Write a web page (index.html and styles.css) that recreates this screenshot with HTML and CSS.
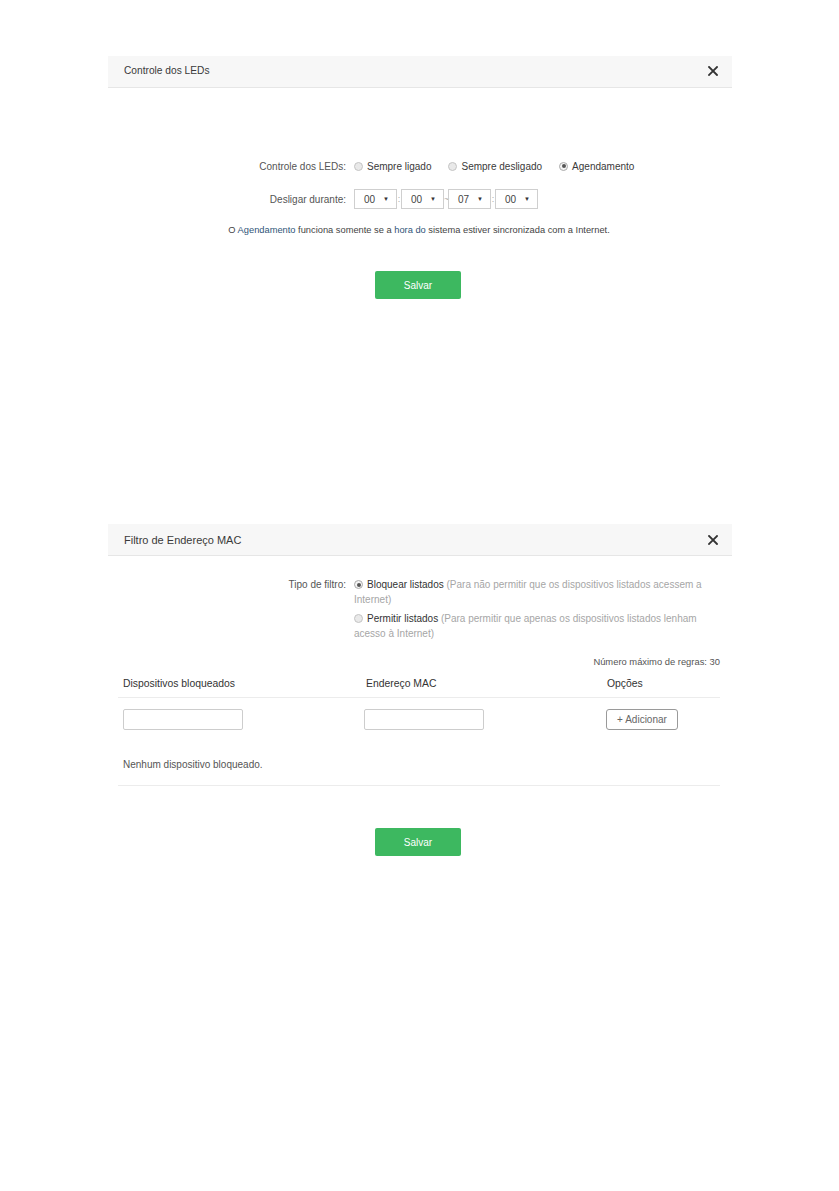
FILE: index.html
```html
<!DOCTYPE html>
<html lang="pt">
<head>
<meta charset="utf-8">
<title>Controle dos LEDs</title>
<link rel="stylesheet" href="styles.css">
</head>
<body>
<section class="panel panel-leds">
  <header class="panel-head">
    <span class="panel-title">Controle dos LEDs</span>
    <svg class="close" width="10" height="10" viewBox="0 0 10 10"><path d="M1 1L9 9M9 1L1 9" stroke="#333" stroke-width="1.8" stroke-linecap="square"/></svg>
  </header>
  <div class="panel-body leds-body">
    <div class="form-row">
      <span class="label">Controle dos LEDs:</span>
      <div class="radios">
        <span class="radio-item"><span class="radio"></span>Sempre ligado</span>
        <span class="radio-item"><span class="radio"></span>Sempre desligado</span>
        <span class="radio-item"><span class="radio checked"></span>Agendamento</span>
      </div>
    </div>
    <div class="form-row">
      <span class="label">Desligar durante:</span>
      <div class="times">
        <span class="select">00<span class="arrow">▼</span></span>
        <span class="sep">:</span>
        <span class="select">00<span class="arrow">▼</span></span>
        <span class="sep">~</span>
        <span class="select">07<span class="arrow">▼</span></span>
        <span class="sep">:</span>
        <span class="select">00<span class="arrow">▼</span></span>
      </div>
    </div>
    <p class="note">O <span class="hl">Agendamento</span> funciona somente se a <span class="hl">hora do</span> sistema estiver sincronizada com a Internet.</p>
    <button class="btn-save">Salvar</button>
  </div>
</section>

<section class="panel panel-mac">
  <header class="panel-head">
    <span class="panel-title">Filtro de Endereço MAC</span>
    <svg class="close" width="10" height="10" viewBox="0 0 10 10"><path d="M1 1L9 9M9 1L1 9" stroke="#333" stroke-width="1.8" stroke-linecap="square"/></svg>
  </header>
  <div class="panel-body mac-body">
    <div class="form-row filter-row">
      <span class="label">Tipo de filtro:</span>
      <div class="options">
        <div class="option">
          <div class="opt-line"><span class="radio checked"></span><b>Bloquear listados</b> <span>(Para não permitir que os dispositivos listados acessem a</span></div>
          <div class="opt-line">Internet)</div>
        </div>
        <div class="option">
          <div class="opt-line"><span class="radio"></span><b>Permitir listados</b> <span>(Para permitir que apenas os dispositivos listados lenham</span></div>
          <div class="opt-line">acesso à Internet)</div>
        </div>
      </div>
    </div>
    <div class="table-wrap">
      <p class="max-rules">Número máximo de regras: 30</p>
      <div class="table">
        <div class="thead">
          <span class="cell">Dispositivos bloqueados</span>
          <span class="cell">Endereço MAC</span>
          <span class="cell">Opções</span>
        </div>
        <div class="trow">
          <span class="cell"><span class="input"></span></span>
          <span class="cell"><span class="input"></span></span>
          <span class="cell"><span class="btn-add">+ Adicionar</span></span>
        </div>
        <p class="empty">Nenhum dispositivo bloqueado.</p>
      </div>
    </div>
    <button class="btn-save">Salvar</button>
  </div>
</section>
</body>
</html>
```
FILE: styles.css
```css
* { box-sizing: border-box; }
body {
  margin: 0;
  background: #fff;
  font-family: "Liberation Sans", Arial, sans-serif;
  font-size: 10px;
  color: #333;
}
p { margin: 0; }

.panel {
  width: 624px;
  margin-left: 108px;
}
.panel-leds { margin-top: 56px; }
.panel-mac { margin-top: 225px; }

.panel-head {
  height: 32px;
  background: #f7f7f7;
  border-bottom: 1px solid #e6e6e6;
  display: flex;
  align-items: center;
  justify-content: space-between;
  padding: 0 14px 0 16px;
}
.panel-leds .panel-head { padding-bottom: 2px; }
.panel-title {
  font-size: 11px;
  color: #3a3a3a;
}
.panel-leds .panel-title { font-size: 10.2px; }
.close { display: block; }

.panel-body {
  display: flex;
  flex-direction: column;
}
.leds-body { padding-top: 68px; }
.mac-body { padding-top: 21px; }

.form-row {
  display: flex;
  align-items: center;
  gap: 8px;
  height: 20px;
}
.form-row + .form-row { margin-top: 13px; }
.label {
  width: 238px;
  text-align: right;
  color: #555;
}

.radios { display: flex; gap: 17px; }
.radio-item { display: flex; align-items: center; color: #3a3a3a; }
.radio {
  display: inline-block;
  flex: none;
  width: 9px;
  height: 9px;
  border-radius: 50%;
  border: 1px solid #c4c4c4;
  background: #e9e9e9;
  margin-right: 4px;
  position: relative;
}
.radio.checked {
  background: #f4f4f4;
  border-color: #aaa;
}
.radio.checked::after {
  content: "";
  position: absolute;
  left: 1.5px;
  top: 1.5px;
  width: 4px;
  height: 4px;
  border-radius: 50%;
  background: #555;
}

.times { display: flex; align-items: center; }
.select {
  width: 43px;
  height: 20px;
  border: 1px solid #cfcfcf;
  display: flex;
  align-items: center;
  justify-content: space-between;
  padding: 0 7px 0 9px;
  color: #444;
}
.arrow { font-size: 6px; color: #333; }
.sep {
  width: 4px;
  text-align: center;
  color: #aaa;
  font-size: 9px;
}

.note {
  margin-top: 14px;
  line-height: 14px;
  text-align: center;
  font-size: 9.3px;
  color: #444;
  padding-right: 2px;
}
.hl { color: #2f5578; }

.btn-save {
  align-self: flex-start;
  margin-left: 267px;
  width: 86px;
  height: 28px;
  border: none;
  border-radius: 2px;
  background: #3db860;
  color: #fff;
  font-family: inherit;
  font-size: 10px;
  margin-top: 34px;
  padding: 0;
}

.filter-row {
  height: auto;
  align-items: flex-start;
  line-height: 15px;
}
.options { width: 370px; }
.option { color: #a6a6a6; }
.opt-line { white-space: nowrap; }
.option .radio { vertical-align: -1px; }
.option + .option { margin-top: 4px; }
.option b { font-weight: normal; color: #333; }

.table-wrap {
  margin: 14px 12px 0 10px;
}
.max-rules {
  text-align: right;
  line-height: 14px;
  font-size: 9.4px;
  color: #555;
}
.thead, .trow {
  display: grid;
  grid-template-columns: 241px 241px 1fr;
}
.thead {
  margin-top: 1px;
  height: 28px;
  align-items: center;
  border-bottom: 1px solid #ececec;
  color: #333;
  font-size: 10.4px;
}
.thead .cell { padding-left: 5px; }
.thead .cell:nth-child(2) { padding-left: 7px; }
.thead .cell:nth-child(3) { padding-left: 7px; }
.trow {
  padding-top: 11px;
  height: 33px;
}
.trow .cell { padding-left: 5px; }
.trow .cell:nth-child(3) { padding-left: 6px; }
.input {
  display: block;
  width: 120px;
  height: 21px;
  border: 1px solid #cdcdcd;
  border-radius: 2px;
}
.btn-add {
  display: flex;
  align-items: center;
  justify-content: center;
  width: 72px;
  height: 21px;
  border: 1px solid #9a9a9a;
  border-radius: 3px;
  color: #666;
}
.empty {
  padding: 27px 0 13px 5px;
  line-height: 14px;
  color: #555;
  border-bottom: 1px solid #ececec;
}
.mac-body .btn-save { margin-top: 42px; }
```
